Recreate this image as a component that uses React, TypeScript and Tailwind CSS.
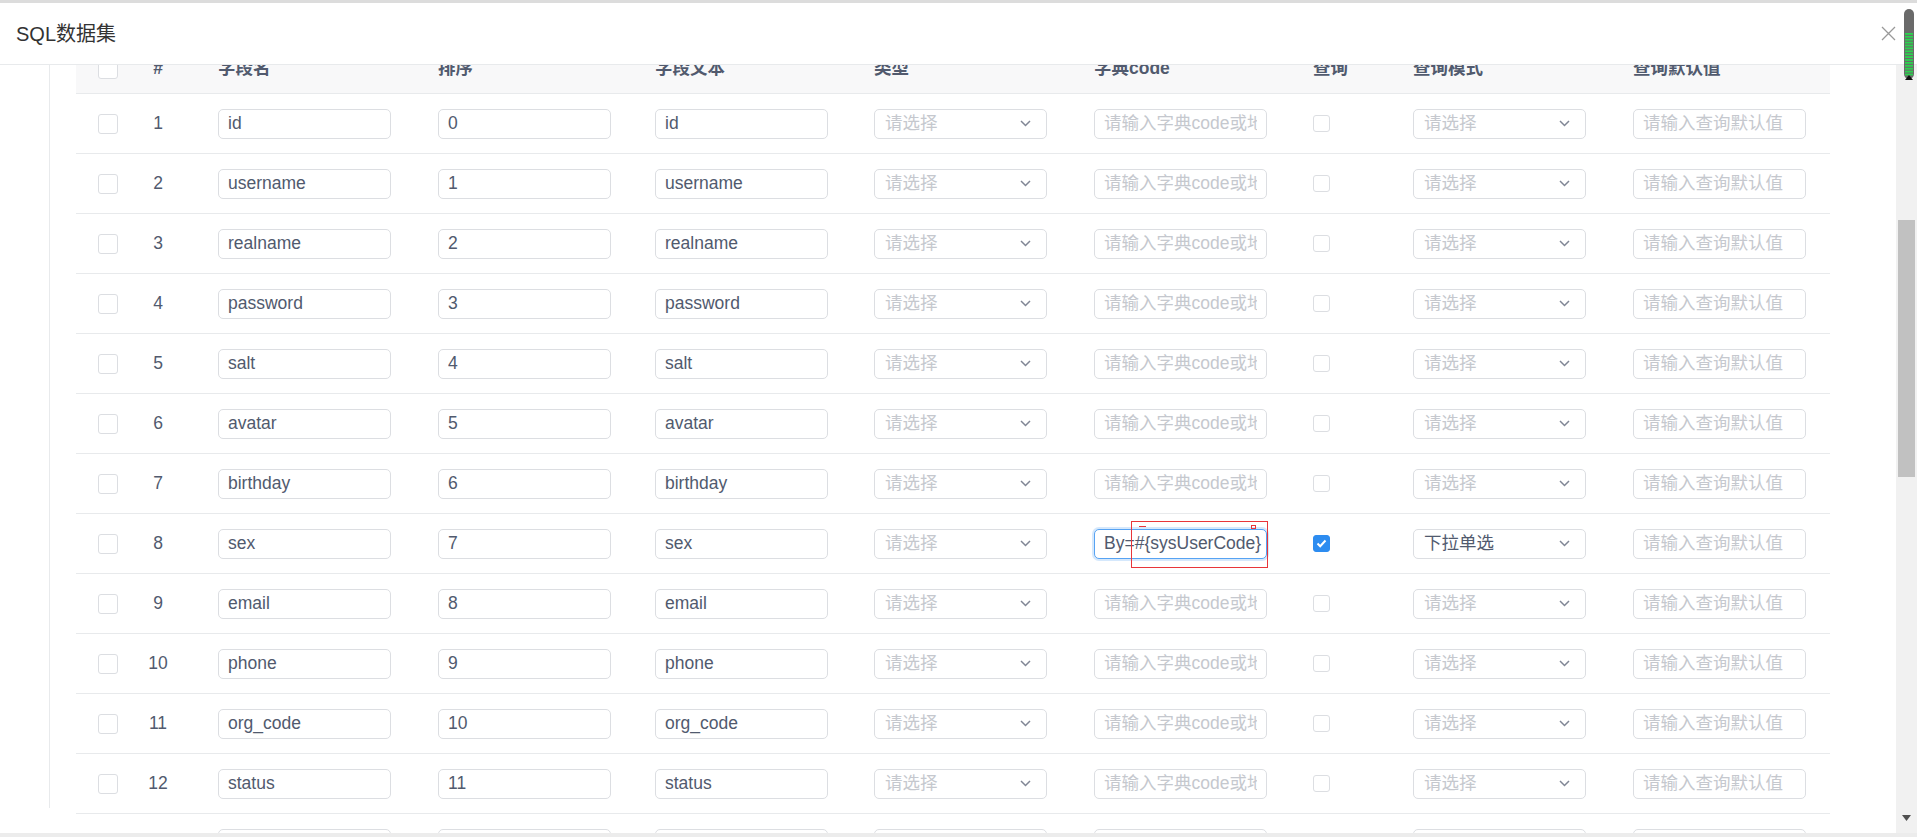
import React from 'react';

const rows = [
  ['id', '0'], ['username', '1'], ['realname', '2'], ['password', '3'],
  ['salt', '4'], ['avatar', '5'], ['birthday', '6'], ['sex', '7'],
  ['email', '8'], ['phone', '9'], ['org_code', '10'], ['status', '11'], ['', ''],
];

function Box({ checked, small }: { checked?: boolean; small?: boolean }) {
  const size = small ? 'w-[17px] h-[17px]' : 'w-[20px] h-[20px]';
  if (checked) {
    return (
      <span className={`${size} rounded-[3px] bg-[#2d8cf0] border border-[#2d8cf0] flex items-center justify-center`}>
        <svg width="11" height="9" viewBox="0 0 11 9" fill="none">
          <path d="M1.5 4.5 L4.2 7.2 L9.5 1.5" stroke="#fff" strokeWidth="2" />
        </svg>
      </span>
    );
  }
  return <span className={`${size} rounded-[3px] bg-white border border-[#dcdee2] block`} />;
}

function Field({ value, placeholder }: { value?: string; placeholder?: string }) {
  return (
    <input
      readOnly
      value={value ?? ''}
      placeholder={placeholder}
      className="h-[30px] w-[173px] border border-[#dcdee2] rounded-[5px] px-[9px] text-[17.5px] text-[#515a6e] placeholder:text-[#c5c8ce] bg-white outline-none"
    />
  );
}

function Select({ value }: { value?: string }) {
  return (
    <div className="h-[30px] w-[173px] border border-[#dcdee2] rounded-[5px] pl-[10px] pr-[15px] flex items-center justify-between bg-white">
      <span className={value ? 'text-[#515a6e]' : 'text-[#c5c8ce]'}>{value ?? '请选择'}</span>
      <svg width="11" height="7" viewBox="0 0 11 7" fill="none">
        <path d="M1 1 L5.5 5.5 L10 1" stroke="#808695" strokeWidth="1.5" />
      </svg>
    </div>
  );
}

function FocusedField() {
  return (
    <div className="h-[30px] w-[173px] border border-[#57a3f3] rounded-[5px] px-[9px] flex items-center text-[17.5px] text-[#515a6e] bg-white shadow-[0_0_0_2px_rgba(45,140,240,0.2)] whitespace-nowrap overflow-hidden">
      By=<span className="inline-block w-px h-[20px] bg-[#333]" />#{'{'}sysUserCode{'}'}
    </div>
  );
}

export default function App() {
  return (
    <div
      className="w-[1917px] h-[837px] overflow-hidden bg-white flex flex-col relative text-[17.5px] text-[#515a6e]"
      style={{ fontFamily: '"Liberation Sans", "Noto Sans CJK SC", sans-serif' }}
    >
      <div className="h-[3px] bg-[#dcdcdc] shrink-0" />
      <div className="h-[62px] shrink-0 flex items-center justify-between pl-[16px] pr-[21px] border-b border-[#e8eaec]">
        <span className="text-[20px] text-[#333]">SQL数据集</span>
        <svg width="15" height="15" viewBox="0 0 15 15" fill="none">
          <path d="M1 1 L14 14 M14 1 L1 14" stroke="#999" strokeWidth="1.3" />
        </svg>
      </div>

      <div className="flex-1 min-h-0 flex">
        <div className="w-[49px] shrink-0" />
        <div className="w-[27px] shrink-0 h-[743px] border-l border-[#e8eaec]" />
        <div className="w-[1754px] shrink-0 overflow-hidden">
          <div className="-mt-[21px]">
            <div className="h-[50px] flex items-center bg-[#f8f8f9] border-b border-[#e8eaec] font-bold">
              <div className="w-[142px] flex items-center">
                <span className="ml-[22px]"><Box /></span>
                <span className="ml-[21px] w-[38px] text-center">#</span>
              </div>
              <div className="w-[220px]">字段名</div>
              <div className="w-[217px]">排序</div>
              <div className="w-[219px]">字段文本</div>
              <div className="w-[220px]">类型</div>
              <div className="w-[219px]">字典code</div>
              <div className="w-[100px]">查询</div>
              <div className="w-[220px]">查询模式</div>
              <div className="flex-1">查询默认值</div>
            </div>

            {rows.map(([name, order], i) => {
              const focus = i === 7;
              return (
                <div key={i} className="h-[60px] flex items-center border-b border-[#e8eaec]">
                  <div className="w-[142px] flex items-center">
                    <span className="ml-[22px]"><Box /></span>
                    <span className="ml-[21px] w-[38px] text-center">{i + 1}</span>
                  </div>
                  <div className="w-[220px]"><Field value={name} /></div>
                  <div className="w-[217px]"><Field value={order} /></div>
                  <div className="w-[219px]"><Field value={name} /></div>
                  <div className="w-[220px]"><Select /></div>
                  <div className="w-[219px] relative">
                    {focus ? (
                      <>
                        <FocusedField />
                        <div className="absolute left-[37px] top-[-8px] w-[137px] h-[47px] border border-[#e8363a]">
                          <span className="absolute left-[7px] top-[4px] w-[7px] h-px bg-[#e8363a]" />
                          <span className="absolute left-[119px] top-[3px] w-[5px] h-[4px] border border-[#e8363a]" />
                        </div>
                      </>
                    ) : (
                      <Field placeholder="请输入字典code或地址" />
                    )}
                  </div>
                  <div className="w-[100px]"><Box small checked={focus} /></div>
                  <div className="w-[220px]"><Select value={focus ? '下拉单选' : undefined} /></div>
                  <div className="flex-1"><Field placeholder="请输入查询默认值" /></div>
                </div>
              );
            })}
          </div>
        </div>
        <div className="flex-1" />
        <div className="w-[21px] shrink-0 bg-[#f1f1f1] flex flex-col items-center pb-[12px]">
          <div className="h-[155px] shrink-0" />
          <div className="w-[17px] h-[257px] bg-[#c1c1c1] shrink-0" />
          <div className="flex-1" />
          <svg width="9" height="6" viewBox="0 0 9 6">
            <path d="M0 0 L9 0 L4.5 6 Z" fill="#505050" />
          </svg>
        </div>
      </div>
      <div className="h-[4px] shrink-0 bg-[#ececec]" />

      {/* floating widget over the scrollbar */}
      <svg className="absolute left-[1903px] top-[9px]" width="12" height="72" viewBox="0 0 12 72">
        <rect x="1" y="0" width="10" height="70" rx="5" fill="#6a6a6a" />
        {Array.from({ length: 15 }).map((_, k) => (
          <rect key={k} x="2" y={24 + k * 2.9} width="8" height="1.8" fill="#2bd34f" />
        ))}
        <path d="M2 71 L6 66 L10 71 Z" fill="#111" />
      </svg>
    </div>
  );
}
